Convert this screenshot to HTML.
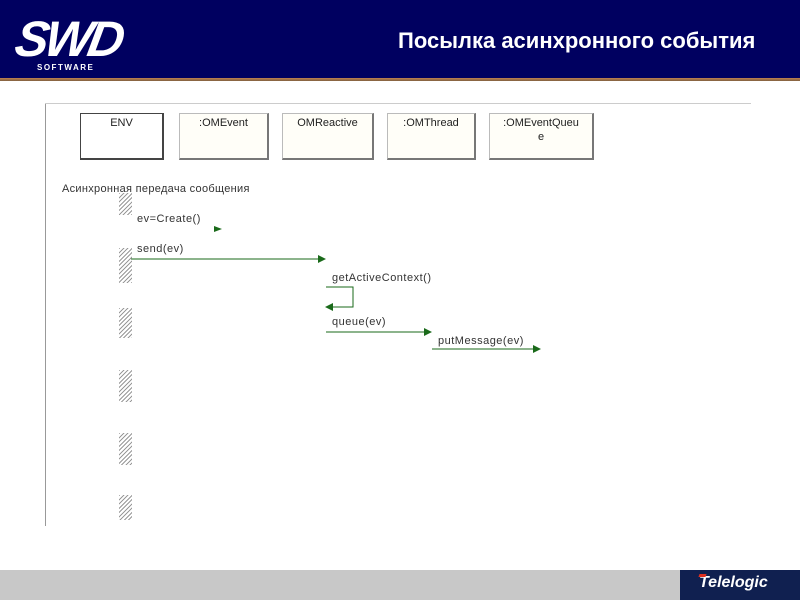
<!DOCTYPE html><html><head><style>
body{margin:0;width:800px;height:600px;position:relative;background:#fff;font-family:"Liberation Sans",sans-serif;overflow:hidden}
.a{position:absolute}
.box{position:absolute;top:113px;height:47px;border:1px solid #bbb;border-right:2px solid #777;border-bottom:2px solid #777;background:#fffef8;font-size:11px;text-align:center;color:#222;line-height:14px;padding-top:2px;box-sizing:border-box}
.h{position:absolute;left:119px;width:13px;background:repeating-linear-gradient(135deg,#999 0 1px,#fff 1px 3px)}
.t{position:absolute;font-size:11px;color:#333;letter-spacing:.5px}
</style></head><body>
<div class="a" style="left:0;top:0;width:800px;height:78px;background:#000060"></div>
<div class="a" style="left:0;top:78px;width:800px;height:3px;background:linear-gradient(#c08050,#806040)"></div>
<div class="a" style="left:16px;top:10px;color:#fff;font:italic bold 50px 'Liberation Sans',sans-serif;letter-spacing:-4px;transform:skewX(-10deg)">SWD</div>
<div class="a" style="left:37px;top:63px;color:#fff;font:bold 8px 'Liberation Sans',sans-serif;letter-spacing:1.5px">SOFTWARE</div>
<div class="a" style="left:398px;top:28px;color:#fff;font:bold 22px 'Liberation Sans',sans-serif;white-space:nowrap">Посылка асинхронного события</div>
<div class="a" style="left:45px;top:103px;width:1px;height:423px;background:#999"></div>
<div class="a" style="left:45px;top:103px;width:706px;height:1px;background:#ccc"></div>
<div class="box" style="left:80px;width:84px;border-color:#444;background:#fff">ENV</div>
<div class="box" style="left:179px;width:90px">:OMEvent</div>
<div class="box" style="left:282px;width:92px">OMReactive</div>
<div class="box" style="left:387px;width:89px">:OMThread</div>
<div class="box" style="left:489px;width:105px">:OMEventQueu<br>e</div>
<div class="h" style="top:193px;height:22px"></div>
<div class="h" style="top:248px;height:35px"></div>
<div class="h" style="top:308px;height:30px"></div>
<div class="h" style="top:370px;height:32px"></div>
<div class="h" style="top:433px;height:32px"></div>
<div class="h" style="top:495px;height:25px"></div>
<div class="t" style="left:62px;top:183px;letter-spacing:.3px">Асинхронная передача сообщения</div>
<div class="t" style="left:137px;top:213px">ev=Create()</div>
<div class="t" style="left:137px;top:243px">send(ev)</div>
<div class="t" style="left:332px;top:272px">getActiveContext()</div>
<div class="t" style="left:332px;top:316px">queue(ev)</div>
<div class="t" style="left:438px;top:335px">putMessage(ev)</div>
<svg class="a" style="left:0;top:0" width="800" height="600">
<g stroke="#1a6a1a" fill="#1a6a1a">
<polygon points="214,226 222,229 214,232" stroke="none"/>
<line x1="131" y1="259" x2="320" y2="259"/><polygon points="318,255 326,259 318,263" stroke="none"/>
<polyline points="326,287 353,287 353,307 330,307" fill="none"/><polygon points="333,303 325,307 333,311" stroke="none"/>
<line x1="326" y1="332" x2="426" y2="332"/><polygon points="424,328 432,332 424,336" stroke="none"/>
<line x1="432" y1="349" x2="535" y2="349"/><polygon points="533,345 541,349 533,353" stroke="none"/>
</g></svg>
<div class="a" style="left:0;top:570px;width:800px;height:30px;background:#c8c8c8"></div>
<div class="a" style="left:680px;top:570px;width:120px;height:30px;background:#102050"></div>
<div class="a" style="left:699px;top:574px;color:#fff;font:italic bold 16px 'Liberation Sans',sans-serif">Telelogic</div>
<div class="a" style="left:699px;top:574px;width:7px;height:3px;background:#e03020;transform:skewX(-20deg)"></div>
</body></html>
